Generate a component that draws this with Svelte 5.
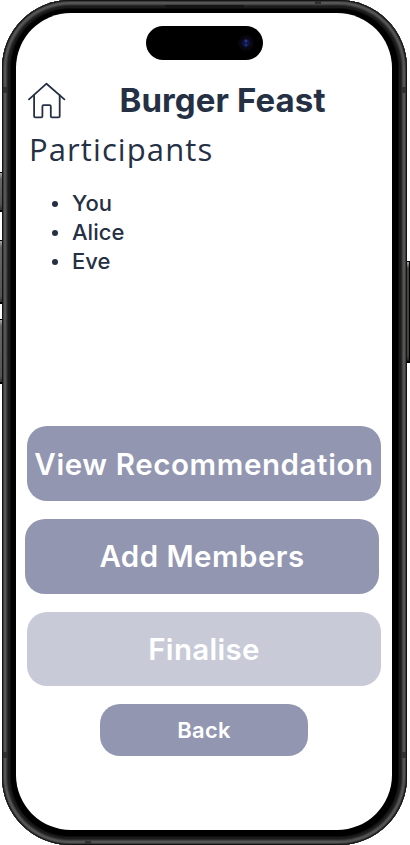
<script>
  const participants = ['You', 'Alice', 'Eve'];
  const keys = [
    { side: 'left', top: 172, height: 40 },
    { side: 'left', top: 240, height: 64 },
    { side: 'left', top: 319, height: 65 },
    { side: 'right', top: 261, height: 102 }
  ];
</script>

<div class="device">
  {#each keys as key}
    <i class="key {key.side}" style="top: {key.top}px; height: {key.height}px"></i>
  {/each}
  <div class="body">
    <i class="seam top-right"></i>
    <i class="seam bottom-left"></i>
    <i class="seam left-upper"></i>
    <i class="seam left-lower"></i>
    <i class="seam right-upper"></i>
    <i class="seam right-lower"></i>
    <i class="speaker"></i>
    <main class="screen">
      <div class="island"><span class="lens"></span></div>
      <header>
        <svg class="home" width="38" height="38" viewBox="0 0 38 38" fill="none" stroke="#263044" stroke-width="1.8" stroke-linecap="round" stroke-linejoin="round">
          <path d="M1 17.4 18.5 1.7 36.4 17.4" />
          <path d="M6.1 13.2V34.2Q6.1 35.4 7.3 35.4H13.2Q14.4 35.4 14.4 34.2V24.4Q14.4 23.2 15.6 23.2H21.6Q22.8 23.2 22.8 24.4V34.2Q22.8 35.4 24 35.4H30.5Q31.7 35.4 31.7 34.2V13.2" />
        </svg>
        <h1>Burger Feast</h1>
      </header>
      <h2>Participants</h2>
      <ul>
        {#each participants as name}
          <li><span class="dot"></span><span class="name">{name}</span></li>
        {/each}
      </ul>
      <div class="actions">
        <button class="view">View Recommendation</button>
        <button class="add">Add Members</button>
        <button class="finalise" disabled>Finalise</button>
        <button class="back">Back</button>
      </div>
    </main>
  </div>
</div>

<style>
  :global(body) {
    background: #fff;
    overflow: hidden;
  }
  .device {
    position: relative;
    width: 410px;
    height: 845px;
    box-sizing: border-box;
    padding: 0 2px;
    overflow: hidden;
    font-family: Inter, "Liberation Sans", sans-serif;
    color: #263044;
  }
  .key {
    position: absolute;
    width: 4px;
    box-sizing: border-box;
    background: linear-gradient(#aaa 0, #666 6px, #555 calc(100% - 6px), #333 100%);
    border: solid #000;
  }
  .key.left {
    left: -1px;
    border-width: 1px 0 2px 1px;
  }
  .key.right {
    right: 0;
    border-width: 1px 1px 2px 0;
    background: linear-gradient(#aaa 0, #44443f 6px, #44443f calc(100% - 6px), #222 100%);
  }
  .body {
    position: relative;
    width: 405px;
    height: 845px;
    box-sizing: border-box;
    padding: 13px 15px 15px 14px;
    border-radius: 68px;
    background: #000;
    box-shadow:
      inset 0 0 0 1px #141414,
      inset 0 0 0 2px #3b3b3b,
      inset 0 0 0 4px #555,
      inset 0 0 0 5px #414141,
      inset 0 0 0 6px #292929,
      inset 0 0 0 8px #1b1b1b,
      inset 0 0 0 9px #0c0c0c;
  }
  .seam {
    position: absolute;
    background: #303030;
  }
  .top-right { top: 1px; left: 313px; width: 6px; height: 3px; }
  .bottom-left { bottom: 1px; left: 83px; width: 6px; height: 3px; }
  .left-upper { left: 1px; top: 87px; width: 4px; height: 6px; }
  .left-lower { left: 1px; top: 752px; width: 4px; height: 6px; }
  .right-upper { right: 1px; top: 87px; width: 4px; height: 6px; }
  .right-lower { right: 1px; top: 752px; width: 4px; height: 6px; }
  .speaker {
    position: absolute;
    top: 5px;
    left: 163px;
    width: 79px;
    height: 3px;
    border-radius: 0 0 3px 3px;
    background: #151515;
  }
  .screen {
    display: flex;
    flex-direction: column;
    height: 817px;
    width: 376px;
    box-sizing: border-box;
    padding: 13px 0 0 9px;
    border-radius: 55px;
    background: #fff;
  }
  .island {
    display: flex;
    align-items: center;
    justify-content: flex-end;
    box-sizing: border-box;
    flex: none;
    width: 117px;
    height: 34px;
    margin-left: 120.5px;
    padding-right: 9px;
    border-radius: 17px;
    background: #000;
  }
  .lens {
    width: 16px;
    height: 16px;
    border-radius: 50%;
    background:
      radial-gradient(circle at 8px 6px, #3a4a8c 0, transparent 2px),
      radial-gradient(circle at 8px 10px, #1c4470 0, transparent 2px),
      radial-gradient(circle, #10104c 0 3px, #09080f 5px, #060508 8px);
  }
  header {
    display: flex;
    flex: none;
    align-items: center;
    height: 40px;
    margin-top: 21px;
    padding-left: 3px;
  }
  .home {
    flex: none;
  }
  h1 {
    margin: -2px 0 0 53.5px;
    font-size: 33px;
    line-height: 40px;
    font-weight: 700;
    letter-spacing: 0.1px;
    white-space: nowrap;
  }
  h2 {
    flex: none;
    margin: 7px 0 0 4px;
    font: 400 31px/42px "Open Sans", "Noto Sans", sans-serif;
    letter-spacing: 1.1px;
  }
  ul {
    flex: none;
    list-style: none;
    margin: 19px 0 0 27px;
    padding: 0;
  }
  li {
    display: flex;
    align-items: center;
    height: 29px;
    font-size: 22px;
    font-weight: 500;
  }
  .name {
    margin-top: -2px;
  }
  .dot {
    width: 6px;
    height: 6px;
    margin-right: 14px;
    border-radius: 50%;
    background: #263044;
  }
  .actions {
    display: flex;
    flex-direction: column;
    gap: 18px;
    margin-top: 150.4px;
  }
  button {
    width: 354px;
    height: 74.7px;
    flex: none;
    margin: 0 0 0 2px;
    padding: 0;
    border: 0;
    border-radius: 20px;
    background: #9296b0;
    color: #fff;
    font: 600 29.5px Inter, "Liberation Sans", sans-serif;
    letter-spacing: 0.3px;
    white-space: nowrap;
  }
  .view {
    letter-spacing: 0.6px;
  }
  .add {
    margin-left: 0;
    letter-spacing: 0.45px;
  }
  .finalise {
    background: #c8cad8;
  }
  .back {
    width: 208px;
    height: 52px;
    margin-left: 75px;
    font-size: 22px;
  }
</style>
